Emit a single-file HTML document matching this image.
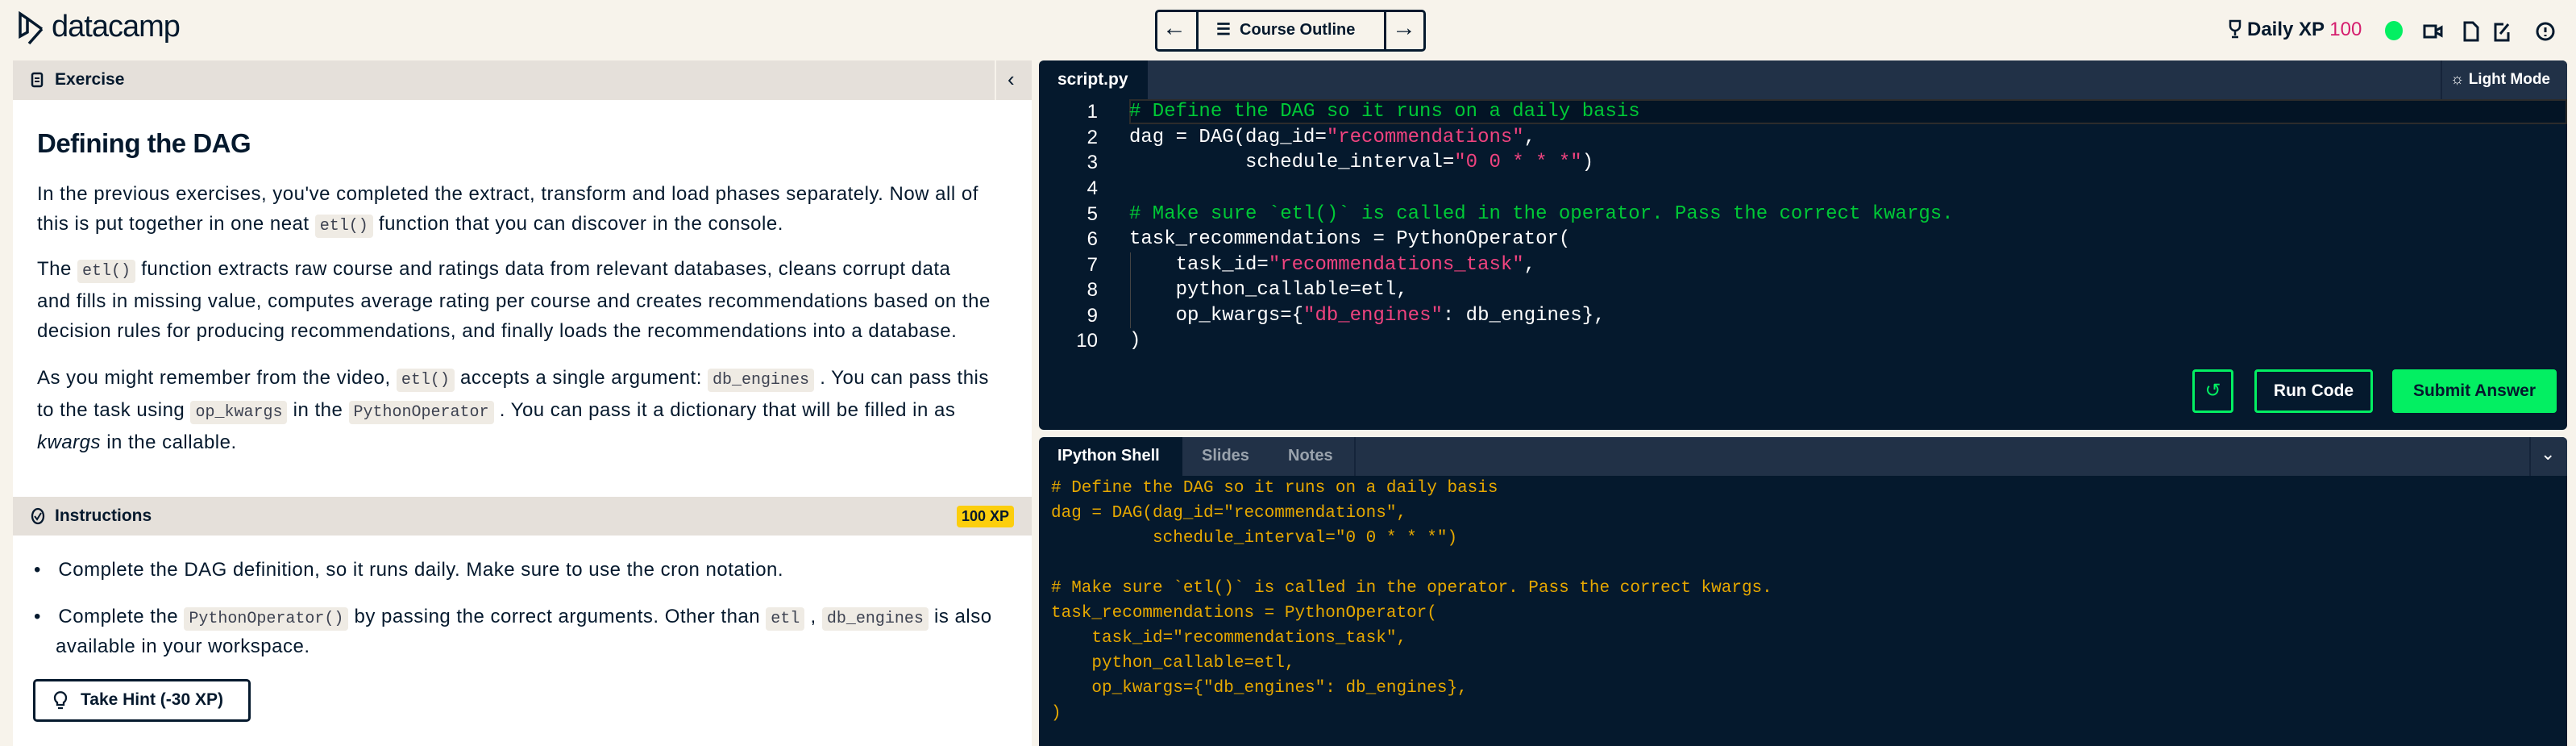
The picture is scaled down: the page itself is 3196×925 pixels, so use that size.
<!DOCTYPE html>
<html><head><meta charset="utf-8"><style>
*{box-sizing:border-box;margin:0;padding:0}
body{width:3196px;height:925px;background:#f7f3eb;font-family:"Liberation Sans",sans-serif;color:#05192d;position:relative;overflow:hidden}
.abs{position:absolute}
.mono{font-family:"Liberation Mono",monospace}
code{font-family:"Liberation Mono",monospace;background:#efebe4;border-radius:4px;padding:3px 6px;font-size:20px;color:#3d4251;letter-spacing:0}
.p{position:absolute;left:46px;width:1230px;font-size:24px;letter-spacing:0.5px;line-height:37px;color:#05192d;white-space:nowrap}
.cl{position:absolute;left:1401px;font-size:24px;white-space:pre;color:#fff;height:31px;line-height:31px}
.ln{position:absolute;left:1310px;width:52px;text-align:right;font-size:24px;color:#fff;line-height:31px}
.g{color:#00c936}.s{color:#f0437f}
.sh{position:absolute;left:1304px;font-size:21px;white-space:pre;color:#e6a800;line-height:31px}
</style></head><body>
<!-- top bar -->
<svg class="abs" style="left:22px;top:14px" width="40" height="46" viewBox="0 0 40 46"><path d="M3 3v28l9-5V9z M12 9 L30 22 M30 22 L14 40" fill="none" stroke="#05192d" stroke-width="3.5"/></svg>
<div class="abs" style="left:64px;top:12px;font-size:38px;letter-spacing:-1px;color:#05192d">datacamp</div>
<div class="abs" style="left:1433px;top:12px;width:336px;height:52px;border:3px solid #05192d;border-radius:5px;background:#f7f3eb"></div>
<div class="abs" style="left:1484px;top:12px;width:3px;height:52px;background:#05192d"></div>
<div class="abs" style="left:1717px;top:12px;width:3px;height:52px;background:#05192d"></div>
<div class="abs" style="left:1442px;top:18px;font-size:30px">←</div>
<div class="abs" style="left:1727px;top:18px;font-size:30px">→</div>
<div class="abs" style="left:1509px;top:24px;font-size:20px;font-weight:bold">☰&nbsp;&nbsp;Course Outline</div>
<svg class="abs" style="left:2764px;top:24px" width="18" height="26"><path d="M3 2h12v6a6 6 0 0 1-12 0z M9 14v6 M5 22h8" fill="none" stroke="#05192d" stroke-width="2.5"/></svg>
<div class="abs" style="left:2788px;top:23px;font-size:24px;font-weight:bold">Daily XP <span style="color:#d51e6e;font-weight:normal">100</span></div>
<div class="abs" style="left:2959px;top:26px;width:22px;height:24px;border-radius:50%;background:#03ef62"></div>
<svg class="abs" style="left:3006px;top:26px;width:200px;height:26px" viewBox="0 0 200 26"><g fill="none" stroke="#05192d" stroke-width="3"><rect x="2" y="6" width="14" height="14"/><path d="M16 12l7-4v10l-7-4"/><path d="M52 2h10l6 6v16H52z"/><path d="M100 4h-10v20h16V14 M96 16l10-12"/><circle cx="152" cy="13" r="10"/><path d="M152 8v6 M152 17v2"/></g></svg>

<!-- left panel -->
<div class="abs" style="left:16px;top:75px;width:1264px;height:850px;background:#fff"></div>
<div class="abs" style="left:16px;top:75px;width:1264px;height:49px;background:#e5e0da"></div>
<div class="abs" style="left:1234px;top:75px;width:2px;height:49px;background:#f7f3eb"></div>
<div class="abs" style="left:1250px;top:83px;font-size:26px">‹</div>
<svg class="abs" style="left:38px;top:89px" width="16" height="20"><rect x="2" y="2" width="12" height="16" rx="2" fill="none" stroke="#05192d" stroke-width="2.5"/><path d="M5 8h6M5 12h6" stroke="#05192d" stroke-width="2"/></svg>
<div class="abs" style="left:68px;top:87px;font-size:21px;font-weight:bold">Exercise</div>
<div class="abs" style="left:46px;top:159px;font-size:33px;font-weight:bold;letter-spacing:-0.5px">Defining the DAG</div>
<div class="p" style="top:222px">In the previous exercises, you've completed the extract, transform and load phases separately. Now all of<br>this is put together in one neat <code>etl()</code> function that you can discover in the console.</div>
<div class="p" style="top:315px">The <code>etl()</code> function extracts raw course and ratings data from relevant databases, cleans corrupt data<br>and fills in missing value, computes average rating per course and creates recommendations based on the<br>decision rules for producing recommendations, and finally loads the recommendations into a database.</div>
<div class="p" style="top:450px">As you might remember from the video, <code>etl()</code> accepts a single argument: <code>db_engines</code> . You can pass this<br>to the task using <code>op_kwargs</code> in the <code>PythonOperator</code> . You can pass it a dictionary that will be filled in as<br><i>kwargs</i> in the callable.</div>
<div class="abs" style="left:16px;top:616px;width:1264px;height:48px;background:#e5e0da"></div>
<svg class="abs" style="left:38px;top:629px" width="18" height="22"><ellipse cx="9" cy="11" rx="7" ry="9" fill="none" stroke="#05192d" stroke-width="2.3"/><path d="M5 11l3 4 5-8" fill="none" stroke="#05192d" stroke-width="2"/></svg>
<div class="abs" style="left:68px;top:628px;font-size:21px;font-weight:bold">Instructions</div>
<div class="abs" style="left:1187px;top:627px;width:71px;height:27px;background:#fcce0d;border-radius:4px;font-size:18px;font-weight:bold;text-align:center;line-height:27px">100 XP</div>
<div class="p" style="left:42px;top:688px">•&nbsp;&nbsp;&nbsp;Complete the DAG definition, so it runs daily. Make sure to use the cron notation.</div>
<div class="p" style="left:42px;top:746px">•&nbsp;&nbsp;&nbsp;Complete the <code>PythonOperator()</code> by passing the correct arguments. Other than <code>etl</code> , <code>db_engines</code> is also</div>
<div class="p" style="left:69px;top:783px">available in your workspace.</div>
<div class="abs" style="left:41px;top:842px;width:270px;height:53px;border:3px solid #05192d;border-radius:5px"></div>
<svg class="abs" style="left:66px;top:854px" width="18" height="28"><path d="M5 17a7 7 0 1 1 8 0v3H5z M6 24h6" fill="none" stroke="#05192d" stroke-width="2.3"/></svg>
<div class="abs" style="left:100px;top:856px;font-size:21px;font-weight:bold">Take Hint (-30 XP)</div>

<!-- editor -->
<div class="abs" style="left:1289px;top:75px;width:1896px;height:458px;background:#05192d;border-radius:6px"></div>
<div class="abs" style="left:1424px;top:75px;width:1761px;height:48px;background:#213147;border-top-right-radius:6px"></div>
<div class="abs" style="left:3028px;top:75px;width:2px;height:48px;background:#15243a"></div>
<div class="abs" style="left:1312px;top:87px;font-size:21px;font-weight:bold;color:#fff">script.py</div>
<div class="abs" style="left:3040px;top:88px;font-size:19px;font-weight:bold;color:#fff">☼ Light Mode</div>
<div class="abs" style="left:1401px;top:123px;width:1784px;height:31px;border:2px solid #2c2c2c;background:#031425"></div>
<div class="ln" style="top:123px">1</div><div class="ln" style="top:155px">2</div><div class="ln" style="top:186px">3</div><div class="ln" style="top:218px">4</div><div class="ln" style="top:250px">5</div><div class="ln" style="top:281px">6</div><div class="ln" style="top:313px">7</div><div class="ln" style="top:344px">8</div><div class="ln" style="top:376px">9</div><div class="ln" style="top:407px">10</div>
<div class="cl mono g" style="top:123px"># Define the DAG so it runs on a daily basis</div>
<div class="cl mono" style="top:155px">dag = DAG(dag_id=<span class="s">"recommendations"</span>,</div>
<div class="cl mono" style="top:186px">          schedule_interval=<span class="s">"0 0 * * *"</span>)</div>
<div class="cl mono g" style="top:250px"># Make sure `etl()` is called in the operator. Pass the correct kwargs.</div>
<div class="cl mono" style="top:281px">task_recommendations = PythonOperator(</div>
<div class="cl mono" style="top:313px">    task_id=<span class="s">"recommendations_task"</span>,</div>
<div class="cl mono" style="top:344px">    python_callable=etl,</div>
<div class="cl mono" style="top:376px">    op_kwargs={<span class="s">"db_engines"</span>: db_engines},</div>
<div class="cl mono" style="top:407px">)</div>
<div class="abs" style="left:1402px;top:313px;width:1px;height:94px;background:#444"></div>
<div class="abs" style="left:2720px;top:458px;width:51px;height:54px;border:3px solid #03ef62;border-radius:4px;color:#03ef62;font-size:24px;text-align:center;line-height:48px">↺</div>
<div class="abs" style="left:2797px;top:458px;width:147px;height:54px;border:3px solid #03ef62;border-radius:4px;color:#fff;font-size:21px;font-weight:bold;text-align:center;line-height:48px">Run Code</div>
<div class="abs" style="left:2968px;top:458px;width:204px;height:54px;background:#03ef62;border-radius:4px;color:#05192d;font-size:21px;font-weight:bold;text-align:center;line-height:54px">Submit Answer</div>

<!-- shell -->
<div class="abs" style="left:1289px;top:542px;width:1896px;height:383px;background:#05192d;border-radius:6px 6px 0 0"></div>
<div class="abs" style="left:1467px;top:542px;width:213px;height:48px;background:#213147"></div>
<div class="abs" style="left:1680px;top:542px;width:1505px;height:48px;background:#213147;border-left:2px solid #15243a;border-top-right-radius:6px"></div>
<div class="abs" style="left:3138px;top:542px;width:2px;height:48px;background:#15243a"></div>
<div class="abs" style="left:1312px;top:554px;font-size:20px;font-weight:bold;color:#fff">IPython Shell</div>
<div class="abs" style="left:1491px;top:554px;font-size:20px;font-weight:bold;color:#9aa3ad">Slides</div>
<div class="abs" style="left:1598px;top:554px;font-size:20px;font-weight:bold;color:#9aa3ad">Notes</div>
<div class="abs" style="left:3152px;top:550px;font-size:22px;color:#fff">⌄</div>
<div class="sh mono" style="top:590px"># Define the DAG so it runs on a daily basis
dag = DAG(dag_id="recommendations",
          schedule_interval="0 0 * * *")

# Make sure `etl()` is called in the operator. Pass the correct kwargs.
task_recommendations = PythonOperator(
    task_id="recommendations_task",
    python_callable=etl,
    op_kwargs={"db_engines": db_engines},
)</div>
</body></html>
